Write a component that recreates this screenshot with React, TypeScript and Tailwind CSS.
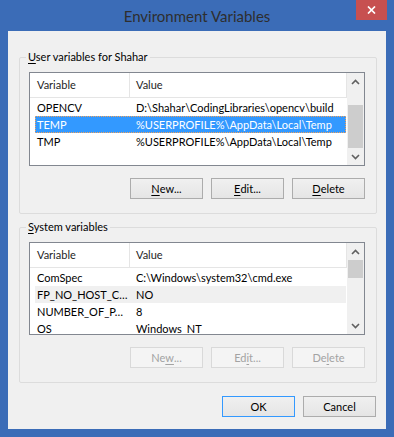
import React from "react";

type Row = { name: string; value: string; state?: "selected" | "hover" };

const userRows: Row[] = [
  { name: "OPENCV", value: "D:\\Shahar\\CodingLibraries\\opencv\\build" },
  { name: "TEMP", value: "%USERPROFILE%\\AppData\\Local\\Temp", state: "selected" },
  { name: "TMP", value: "%USERPROFILE%\\AppData\\Local\\Temp" },
];

const systemRows: Row[] = [
  { name: "ComSpec", value: "C:\\Windows\\system32\\cmd.exe" },
  { name: "FP_NO_HOST_C…", value: "NO", state: "hover" },
  { name: "NUMBER_OF_P…", value: "8" },
  { name: "OS", value: "Windows_NT" },
];

function Chevron({ down }: { down?: boolean }) {
  return (
    <svg width="9" height="6" viewBox="0 0 9 6" className={down ? "rotate-180" : ""}>
      <polyline points="1,5 4.5,1.5 8,5" fill="none" stroke="#606060" strokeWidth="1.6" />
    </svg>
  );
}

function ListView({
  rows,
  height,
  thumbOffset,
  thumbHeight,
}: {
  rows: Row[];
  height: string;
  thumbOffset: string;
  thumbHeight: string;
}) {
  return (
    <div className={`flex w-[336px] border border-[#828790] bg-white overflow-hidden ${height}`}>
      <div className="flex-1 flex flex-col min-w-0">
        {/* header */}
        <div className="flex h-[25px] shrink-0 border-b border-r border-[#e5e5e5] text-[#1e1e1e]">
          <div className="w-[100px] border-r border-[#e5e5e5] pl-[7px] flex items-center">Variable</div>
          <div className="flex-1 pl-[6px] flex items-center">Value</div>
        </div>
        <div className="pt-[1px] flex flex-col">
          {rows.map((r) => (
            <div
              key={r.name}
              className={
                "flex h-[17px] shrink-0 items-center ml-[5px] mr-[1px] whitespace-nowrap " +
                (r.state === "selected"
                  ? "bg-[#3399ff] text-white outline-1 outline-dotted outline-[#f3a25a] -outline-offset-1"
                  : r.state === "hover"
                  ? "bg-[#f0f0f0] text-black"
                  : "text-black")
              }
            >
              <div className="w-[95px] pl-[2px] overflow-hidden">{r.name}</div>
              <div className="flex-1 pl-[6px] overflow-hidden">{r.value}</div>
            </div>
          ))}
        </div>
      </div>
      {/* scrollbar */}
      <div className="w-[17px] shrink-0 bg-[#f0f0f0] flex flex-col">
        <div className="h-[17px] flex items-center justify-center">
          <Chevron />
        </div>
        <div className="flex-1 flex flex-col items-center">
          <div className={thumbOffset} />
          <div className={`w-[15px] bg-[#cdcdcd] ${thumbHeight}`} />
        </div>
        <div className="h-[17px] flex items-center justify-center">
          <Chevron down />
        </div>
      </div>
    </div>
  );
}

function Btn({ children, disabled }: { children: React.ReactNode; disabled?: boolean }) {
  return (
    <div
      className={
        "w-[73px] h-[21px] flex items-center justify-center border " +
        (disabled
          ? "border-[#d9d9d9] bg-[#f4f4f4] text-[#a3a3a3]"
          : "border-[#acacac] bg-linear-to-b from-[#f0f0f0] to-[#e5e5e5] text-black")
      }
    >
      {children}
    </div>
  );
}

const u = "underline underline-offset-[2px] decoration-1";

export default function App() {
  return (
    <div className="w-[394px] h-[437px] bg-[#3b6cb7] flex flex-col font-['Lato',sans-serif] text-[11px] leading-[16px]">
      {/* title bar */}
      <div className="relative h-[31px] shrink-0 flex items-center justify-center">
        <span className="text-[15px] text-[#2e2e2e]">Environment Variables</span>
        <div className="absolute top-0 right-[7px] w-[31px] h-[20px] bg-[#c75050] flex items-center justify-center">
          <svg width="9" height="8" viewBox="0 0 9 8">
            <path d="M1 0.5 L8 7.5 M8 0.5 L1 7.5" stroke="white" strokeWidth="1.7" />
          </svg>
        </div>
      </div>

      {/* client area */}
      <div className="mx-[8px] h-[398px] bg-[#f0f0f0] flex flex-col pt-[18px] pl-[11px] pr-[9px]">
        <fieldset className="w-[358px] border border-[#dcdcdc] rounded-[2px] pl-[9px] pt-[7px] pb-[14px]">
          <legend className="-ml-[3px] px-[2px] leading-[16px] text-black">
            <span className={u}>U</span>ser variables for Shahar
          </legend>
          <ListView rows={userRows} height="h-[94px]" thumbOffset="h-[15px]" thumbHeight="h-[43px]" />
          <div className="w-[336px] mt-[12px] flex justify-end gap-[8px]">
            <Btn>
              <span className={u}>N</span>ew...
            </Btn>
            <Btn>
              <span className={u}>E</span>dit...
            </Btn>
            <Btn>
              <span className={u}>D</span>elete
            </Btn>
          </div>
        </fieldset>

        <fieldset className="w-[358px] mt-[5px] border border-[#dcdcdc] rounded-[2px] pl-[9px] pt-[7px] pb-[14px]">
          <legend className="-ml-[3px] px-[2px] leading-[16px] text-black">
            <span className={u}>S</span>ystem variables
          </legend>
          <ListView rows={systemRows} height="h-[93px]" thumbOffset="h-0" thumbHeight="h-[18px]" />
          <div className="w-[336px] mt-[12px] flex justify-end gap-[8px]">
            <Btn disabled>
              Ne<span className={u}>w</span>...
            </Btn>
            <Btn disabled>
              Ed<span className={u}>i</span>t...
            </Btn>
            <Btn disabled>
              De<span className={u}>l</span>ete
            </Btn>
          </div>
        </fieldset>

        <div className="mt-[13px] pr-[1px] flex justify-end gap-[8px]">
          <div className="w-[73px] h-[21px] flex items-center justify-center border border-[#3399ff] bg-linear-to-b from-[#f0f0f0] to-[#e5e5e5] text-black">
            OK
          </div>
          <Btn>Cancel</Btn>
        </div>
      </div>
    </div>
  );
}
